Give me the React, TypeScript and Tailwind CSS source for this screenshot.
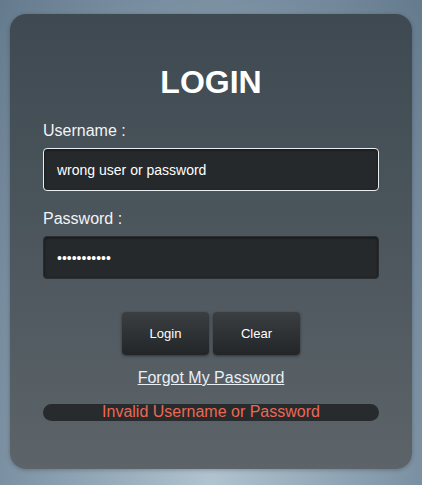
import React from "react";

const font = { fontFamily: '"Liberation Sans", Arial, sans-serif' };

const Field = ({
  label,
  type,
  value,
  focused,
  gap,
}: {
  label: string;
  type: string;
  value: string;
  focused?: boolean;
  gap: string;
}) => {
  return (
    <div className={gap}>
      <label className="block text-[16px] leading-[18px] text-[#f1f4f6]">{label}</label>
      <input
        type={type}
        defaultValue={value}
        readOnly
        className={
          "mt-2 block h-[43px] w-full rounded-[4px] bg-[#25292b] px-[13px] text-[14px] text-white outline-none shadow-[inset_0_1px_3px_rgba(0,0,0,0.5)] " +
          (focused ? "border border-[#e8eef2]" : "border border-[#2a2e30]")
        }
      />
    </div>
  );
};

const App = () => {
  return (
    <div
      style={font}
      className="min-h-[485px] w-full bg-[radial-gradient(ellipse_at_50%_100%,#b1c3cf_0%,#8ea3b3_45%,#647a8d_100%)] px-[10px] pt-[14px] pb-[16px]"
    >
      <div className="h-[455px] rounded-[16px] bg-gradient-to-b from-[#3e4951] to-[#5c6469] px-[33px] pt-[50px] shadow-[0_1px_4px_rgba(0,0,0,0.25)]">
        <h1 className="text-center text-[32px] font-bold leading-[37px] text-white">LOGIN</h1>

        <Field label="Username :" type="text" value="wrong user or password" focused gap="mt-[21px]" />
        <Field label="Password :" type="password" value="wrongpasswd" gap="mt-[19px]" />

        <div className="mt-[33px] flex justify-center gap-[4px]">
          {["Login", "Clear"].map((b) => (
            <button
              key={b}
              className="h-[43px] w-[87px] rounded-[4px] bg-gradient-to-b from-[#3b3f42] to-[#222628] text-[13px] text-white shadow-[0_1px_3px_rgba(0,0,0,0.45)]"
            >
              {b}
            </button>
          ))}
        </div>

        <div className="mt-[14px] text-center text-[16px] leading-[18px]">
          <a href="#" className="text-[#e9eff4] underline">
            Forgot My Password
          </a>
        </div>

        <div className="mt-[17px] h-[17px] rounded-full bg-[#272b2d] text-center text-[16px] leading-[16px] text-[#ec6852]">
          Invalid Username or Password
        </div>
      </div>
    </div>
  );
};

export default App;
